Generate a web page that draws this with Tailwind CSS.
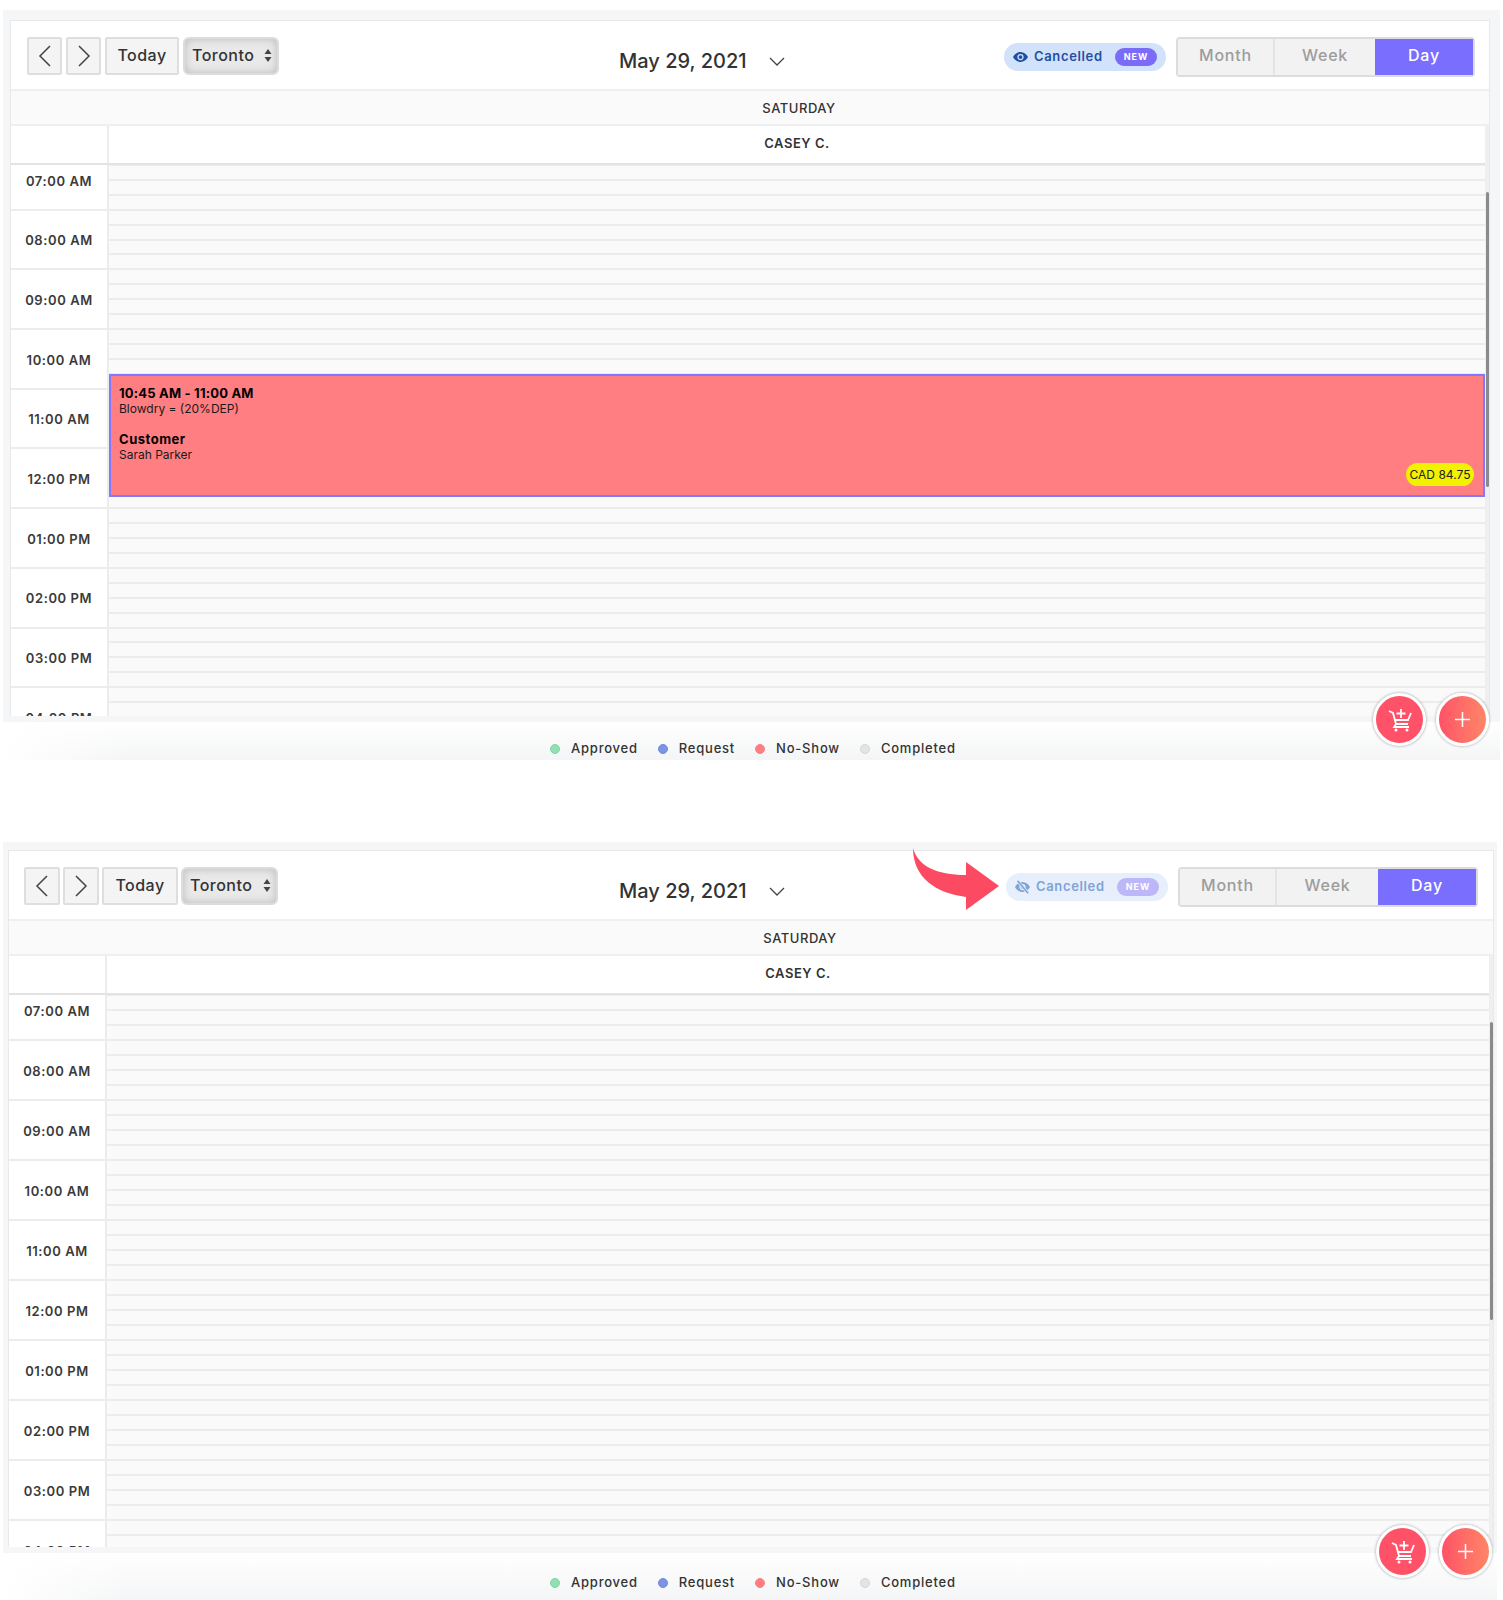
<!DOCTYPE html>
<html lang="en">

<head>
    <meta charset="UTF-8">
    <title>Calendar - Cancelled toggle</title>
    <script src="https://cdn.jsdelivr.net/npm/@tailwindcss/browser@4"></script>
    <meta name="viewport" content="width=device-width, initial-scale=1.0">
</head>

<body class="bg-white font-['Inter','Liberation_Sans',sans-serif] text-[#333] h-[1600px] overflow-hidden">
    <div id="app"></div>

    <script>
        const hours = ['07:00 AM', '08:00 AM', '09:00 AM', '10:00 AM', '11:00 AM', '12:00 PM', '01:00 PM', '02:00 PM', '03:00 PM', '04:00 PM'];

        const eyeOn = `<svg class="w-[15px] h-[12px]" viewBox="0 0 24 18"><path fill="#1e4fa3" fill-rule="evenodd" d="M12 1C6.5 1 2.500 4.500 0 9c2.500 4.500 6.500 8 12 8s9.500-3.500 12-8c-2.500-4.500-6.500-8-12-8zm0 3a5 5 0 1 1 0 10 5 5 0 0 1 0-10z"/><circle cx="12" cy="9" r="3" fill="#1e4fa3"/></svg>`;
        const eyeOff = `<svg class="w-[15px] h-[14px]" viewBox="0 0 24 22"><path fill="#7fa3d6" fill-rule="evenodd" d="M12 3C6.500 3 2.500 6.500 0 11c2.500 4.500 6.500 8 12 8s9.500-3.500 12-8c-2.500-4.500-6.500-8-12-8zm0 3a5 5 0 1 1 0 10 5 5 0 0 1 0-10z"/><circle cx="12" cy="11" r="3" fill="#7fa3d6"/><path stroke="#e6effb" stroke-width="4.500" d="M4 1l17 20"/><path stroke="#7fa3d6" stroke-width="2.600" d="M4 1l17 20"/></svg>`;

        const cartIcon = `<svg class="w-[24px] h-[24px]" viewBox="0 0 24 24" fill="none" stroke="white" stroke-width="1.800"><path d="M1 3l4 2 3 11h12"/><path d="M8 16l-2 3h15"/><path d="M23 5l-3 7H7"/><path d="M13 1v9M8.500 5.500h9"/><circle cx="8" cy="22" r="1.500" fill="white" stroke="none"/><circle cx="19" cy="22" r="1.500" fill="white" stroke="none"/></svg>`;

        function hourRows(rowH) {
            return hours.map(h => `
                <div class="${rowH} shrink-0 flex items-center justify-center pt-[3px] border-b-2 border-[#ececec] bg-white text-[13px] font-semibold tracking-[0.045em] text-[#3a3a3a] whitespace-nowrap">${h}</div>`).join('');
        }

        function slotRows(rowH) {
            const slot = '<div class="flex-1 border-b-2 border-[#ececec]"></div>';
            return hours.map(() => `<div class="${rowH} shrink-0 flex flex-col">${slot}${slot}${slot}${slot}</div>`).join('');
        }

        function legend(item, color) {
            return `<div class="flex items-center gap-[11px]"><span class="w-[10px] h-[10px] rounded-full border ${color}"></span><span>${item}</span></div>`;
        }

        function panel(o) {
            return `
            <div class="relative ${o.root}">
                <div class="${o.band} bg-[#f5f6f7]">
                    <div class="${o.card} bg-white border border-b-0 border-[#e9e9e9] overflow-hidden flex flex-col">

                        <!-- Toolbar -->
                        <div class="h-[70px] shrink-0 border-b-2 border-[#efefef] flex items-start pt-[16px] ${o.toolbar}">
                            <div class="flex ${o.btnGap} text-[16px] font-medium tracking-[0.03em]">
                                <button class="${o.navW} h-[38px] bg-[#f4f4f4] border-2 border-[#dedede] rounded-[2px] flex items-center justify-center">
                                    <svg class="w-[14px] h-[22px]" viewBox="0 0 14 22" fill="none" stroke="#444" stroke-width="1.500"><path d="M12 1L2 11l10 10"/></svg>
                                </button>
                                <button class="${o.navW} h-[38px] bg-[#f4f4f4] border-2 border-[#dedede] rounded-[2px] flex items-center justify-center">
                                    <svg class="w-[14px] h-[22px]" viewBox="0 0 14 22" fill="none" stroke="#444" stroke-width="1.500"><path d="M2 1l10 10L2 21"/></svg>
                                </button>
                                <button class="${o.todayW} h-[38px] pb-[2px] bg-[#f4f4f4] border-2 border-[#dedede] rounded-[2px]">Today</button>
                                <button class="${o.selW} h-[38px] pb-[2px] bg-[#e9e9e9] border-2 border-[#dcdcdc] rounded-[6px] shadow-[inset_0_0_8px_#b9b9b9] flex items-center justify-between pl-[7px] pr-[5px]">
                                    <span>Toronto</span>
                                    <svg class="w-[8px] h-[13px]" viewBox="0 0 8 13" fill="#444"><path d="M4 0l3.500 5H.5zM4 13L.5 8h7z"/></svg>
                                </button>
                            </div>

                            <div class="${o.dateMl} h-[48px] flex items-center text-[#333] text-[20px] font-medium whitespace-nowrap">
                                <span>May 29, 2021</span>
                                <svg class="ml-[22px] w-[16px] h-[9px]" viewBox="0 0 16 9" fill="none" stroke="#444" stroke-width="1.300"><path d="M1 1l7 7 7-7"/></svg>
                            </div>

                            <div class="ml-auto flex items-start">
                                <div class="mt-[6px] mr-[10px] w-[162px] h-[28px] rounded-full flex items-center pl-[9px] pr-[9px] ${o.pill}">
                                    ${o.eye}
                                    <span class="ml-[6px] text-[13px] font-semibold tracking-[0.05em] ${o.pillText}">Cancelled</span>
                                    <span class="ml-auto w-[42px] h-[18px] rounded-full text-white text-[9px] font-bold tracking-[0.1em] flex items-center justify-center ${o.newPill}">NEW</span>
                                </div>
                                <div class="h-[40px] flex border-2 border-[#dcdcdc] rounded-[4px] text-[16px] font-medium tracking-[0.05em] text-[#9c9c9c]">
                                    <div class="w-[97px] pb-[4px] bg-[#f2f2f2] border-r-2 border-[#e4e4e4] flex items-center justify-center">Month</div>
                                    <div class="${o.weekW} pb-[4px] bg-[#f2f2f2] flex items-center justify-center">Week</div>
                                    <div class="w-[98px] pb-[4px] bg-[#7a6eff] text-white flex items-center justify-center">Day</div>
                                </div>
                            </div>
                        </div>

                        <!-- Day header -->
                        <div class="h-[35px] shrink-0 bg-[#fafafa] border-b-2 border-[#efefef] pl-[98px] pt-[2px] flex items-center justify-center text-[13px] font-medium tracking-[0.04em]">SATURDAY</div>

                        <div class="flex-1 min-h-0 flex">
                            <div class="flex-1 min-w-0 flex flex-col">
                                <div class="h-[39px] shrink-0 flex border-b-2 border-[#e3e3e3] bg-white">
                                    <div class="w-[98px] shrink-0 border-r-2 border-[#ececec]"></div>
                                    <div class="flex-1 pb-[2px] flex items-center justify-center text-[13px] font-semibold tracking-[0.04em]">CASEY C.</div>
                                </div>
                                <div class="flex-1 min-h-0 overflow-hidden">
                                    <div class="flex -mt-[14px]">
                                        <div class="w-[98px] shrink-0 border-r-2 border-[#ececec]">${hourRows(o.rowH)}</div>
                                        <div class="relative flex-1 min-w-0 bg-[#fafafa]">
                                            ${slotRows(o.rowH)}
                                            ${o.event ? `
                                            <div class="absolute left-0 right-0 top-[223px] h-[123px] bg-[#ff7e82] border-2 border-[#8079ff] pl-[8px] pt-[9px] text-[12px] leading-[16px] text-[#1a1a1a]">
                                                <div class="text-[13px] font-bold tracking-[0.015em] text-black">10:45 AM - 11:00 AM</div>
                                                <div>Blowdry = (20%DEP)</div>
                                                <div class="mt-[14px] text-[13px] font-bold tracking-[0.04em] text-black">Customer</div>
                                                <div>Sarah Parker</div>
                                                <div class="absolute right-[9px] bottom-[9px] w-[68px] h-[23px] rounded-full bg-[#f2f200] flex items-center justify-center text-[12px] text-[#222] whitespace-nowrap">CAD 84.75</div>
                                            </div>` : ''}
                                        </div>
                                    </div>
                                </div>
                            </div>
                            <!-- Scrollbar -->
                            <div class="relative w-[4px] shrink-0 bg-[#efefef]">
                                <div class="absolute right-0 top-[66px] w-[3px] ${o.thumb} bg-[#8b8b8b] rounded-full"></div>
                            </div>
                        </div>
                    </div>
                </div>

                <!-- Legend -->
                <div class="${o.footer} bg-[linear-gradient(to_right,#fff,transparent_130px),linear-gradient(to_bottom,#fff,#f4f5f6)] flex gap-[20px] text-[13px] font-medium tracking-[0.06em] text-[#333]">
                    ${legend('Approved', 'bg-[#93dfb3] border-[#7fd6a3]')}
                    ${legend('Request', 'bg-[#7d94e6] border-[#6f88e0]')}
                    ${legend('No-Show', 'bg-[#ff7e82] border-[#ff7e82]')}
                    ${legend('Completed', 'bg-[#e4e4e4] border-[#d6d6d6]')}
                </div>

                <!-- Floating buttons -->
                <div class="absolute top-[683px] ${o.fabs} flex gap-[10px]">
                    <button class="w-[53px] h-[53px] rounded-full bg-[#ff5168] border-[3px] border-white shadow-[0_0_3px_#9a9a9a] flex items-center justify-center">${cartIcon}</button>
                    <button class="w-[53px] h-[53px] rounded-full bg-gradient-to-r from-[#ff5168] to-[#ff8566] border-[3px] border-white shadow-[0_0_3px_#9a9a9a] flex items-center justify-center">
                        <svg class="w-[15px] h-[15px]" viewBox="0 0 15 15" stroke="white" stroke-width="1.500"><path d="M7.500 0v15M0 7.500h15"/></svg>
                    </button>
                </div>
                ${o.arrow || ''}
            </div>`;
        }

        document.getElementById('app').innerHTML = panel({
            root: 'mt-[10px] ml-[3px] w-[1497px]',
            band: 'h-[712px] pl-[7px] pt-[10px]',
            card: 'w-[1480px] h-[696px]',
            toolbar: 'pl-[16px] pr-[14px]',
            btnGap: 'gap-[4px]',
            navW: 'w-[35px]',
            todayW: 'w-[74px]',
            selW: 'w-[96px]',
            weekW: 'w-[100px]',
            dateMl: 'ml-[340px]',
            pill: 'bg-[#d2e2fb]',
            pillText: 'text-[#1e4fa3]',
            newPill: 'bg-[#7a6cf6]',
            eye: eyeOn,
            rowH: 'h-[59.7px]',
            thumb: 'h-[295px]',
            event: true,
            footer: 'h-[38px] pt-[16px] pl-[547px]',
            fabs: 'left-[1370px]'
        }) + panel({
            root: 'mt-[82px] ml-[3px] w-[1494px]',
            band: 'h-[711px] pl-[5px] pt-[8px]',
            card: 'w-[1486px] h-[697px]',
            toolbar: 'pl-[15px] pr-[15px]',
            btnGap: 'gap-[3px]',
            navW: 'w-[36px]',
            todayW: 'w-[76px]',
            selW: 'w-[97px]',
            weekW: 'w-[101px]',
            dateMl: 'ml-[341px]',
            pill: 'bg-[#e6effb]',
            pillText: 'text-[#7fa3d6]',
            newPill: 'bg-[#bdb6f8]',
            eye: eyeOff,
            rowH: 'h-[60px]',
            thumb: 'h-[298px]',
            event: false,
            footer: 'h-[47px] pt-[13px] pl-[547px]',
            fabs: 'left-[1373px]',
            arrow: `<svg class="absolute left-[902px] top-[3px] w-[100px] h-[70px]" viewBox="905 845 100 70"><path fill="#fc4a62" d="M913 848C918 866 936 875 966 875V862L999 886 966 910V897C936 893 913 878 913 848Z"/></svg>`
        });
    </script>
</body>

</html>
